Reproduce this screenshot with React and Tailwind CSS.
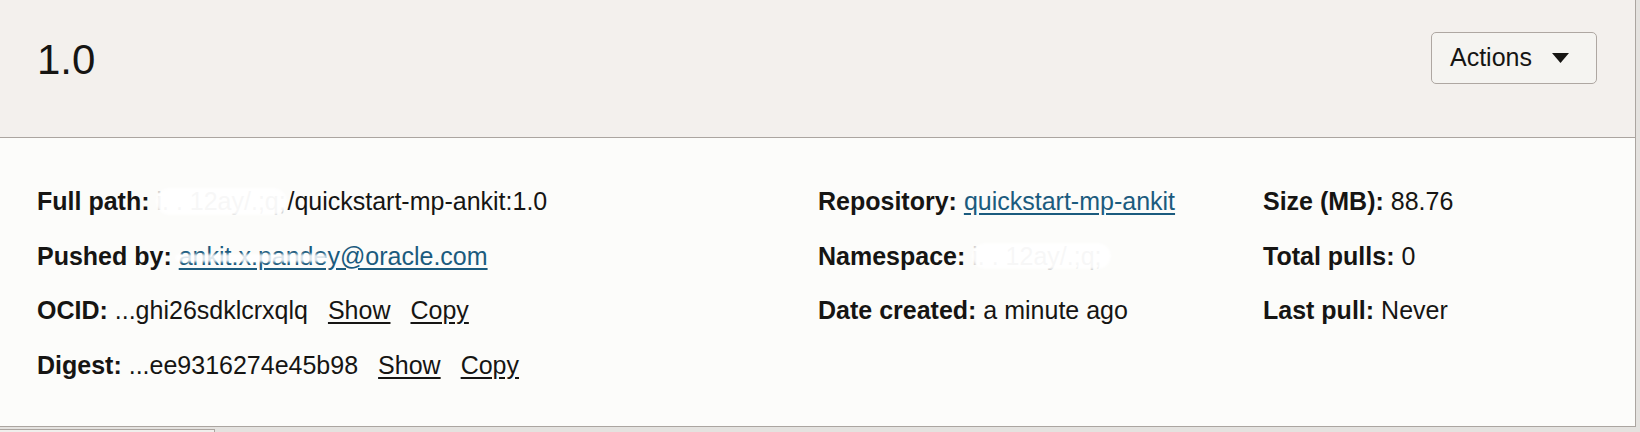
import React from 'react';

const font = { fontFamily: '"Liberation Sans", Arial, sans-serif' };

// blurred-out personal data, as in the screenshot
const Redacted = ({ width, text }) => (
  <span className={`relative inline-block align-bottom whitespace-nowrap text-[#c9c9c9] ${width}`}>
    {text}
    <span className="absolute inset-x-0 top-[14px] bottom-[14px] rounded-full bg-white/85 blur-[1px]" />
  </span>
);

const Field = ({ label, children }) => (
  <div className="whitespace-nowrap">
    <span className="font-bold">{label}:</span> {children}
  </div>
);

const TextLink = ({ children }) => (
  <a href="#" className="ml-[20px] underline underline-offset-[3px] text-[#161513]">
    {children}
  </a>
);

export default function App() {
  return (
    <div style={font} className="w-[1640px] h-[432px] overflow-hidden bg-[#e4e2df] text-[#161513]">
      <div className="w-[1636px] border-r border-b border-[#aba5a0] bg-[#fcfcfa]">
        <div className="h-[138px] flex items-start justify-between pl-[37px] pr-[38px] bg-[#f3f0ed] border-b border-[#aba5a0]">
          <h1 className="mt-[39px] text-[42px] leading-none">1.0</h1>
          <button className="mt-[32px] w-[166px] h-[52px] flex items-center justify-between pl-[18px] pr-[27px] rounded-[5px] border border-[#aea7a2] bg-[#f5f4f1] text-[25px]">
            <span>Actions</span>
            <svg width="17" height="10" viewBox="0 0 17 10">
              <path d="M0 0h17L8.5 10z" fill="#161513" />
            </svg>
          </button>
        </div>

        <div className="h-[288px] pt-[36px] pl-[37px] grid grid-cols-[781px_445px_1fr] text-[25px] leading-[54.5px]">
          <div>
            <Field label="Full path">
              <Redacted width="w-[131px]" text="i. . 12ay/.;q;" />/quickstart-mp-ankit:1.0
            </Field>
            <Field label="Pushed by">
              <a href="#" className="relative text-[#1b5b7e] underline underline-offset-[3px]">
                ankit.x.pandey@oracle.com
                <span className="absolute left-[-4px] w-[152px] top-[12px] bottom-[8px] rounded-sm bg-white/85 blur-[1px]" />
              </a>
            </Field>
            <Field label="OCID">
              ...ghi26sdklcrxqlq<TextLink>Show</TextLink><TextLink>Copy</TextLink>
            </Field>
            <Field label="Digest">
              ...ee9316274e45b98<TextLink>Show</TextLink><TextLink>Copy</TextLink>
            </Field>
          </div>
          <div>
            <Field label="Repository">
              <a href="#" className="text-[#1b5b7e] underline underline-offset-[3px]">quickstart-mp-ankit</a>
            </Field>
            <Field label="Namespace">
              <Redacted width="w-[139px]" text="i. . 12ay/.;q;" />
            </Field>
            <Field label="Date created">a minute ago</Field>
          </div>
          <div>
            <Field label="Size (MB)">88.76</Field>
            <Field label="Total pulls">0</Field>
            <Field label="Last pull">Never</Field>
          </div>
        </div>
      </div>
      <div className="pt-[2px] h-[6px]">
        <div className="w-[215px] h-full border-t border-r border-[#aba5a0] bg-[#f0efec]" />
      </div>
    </div>
  );
}
